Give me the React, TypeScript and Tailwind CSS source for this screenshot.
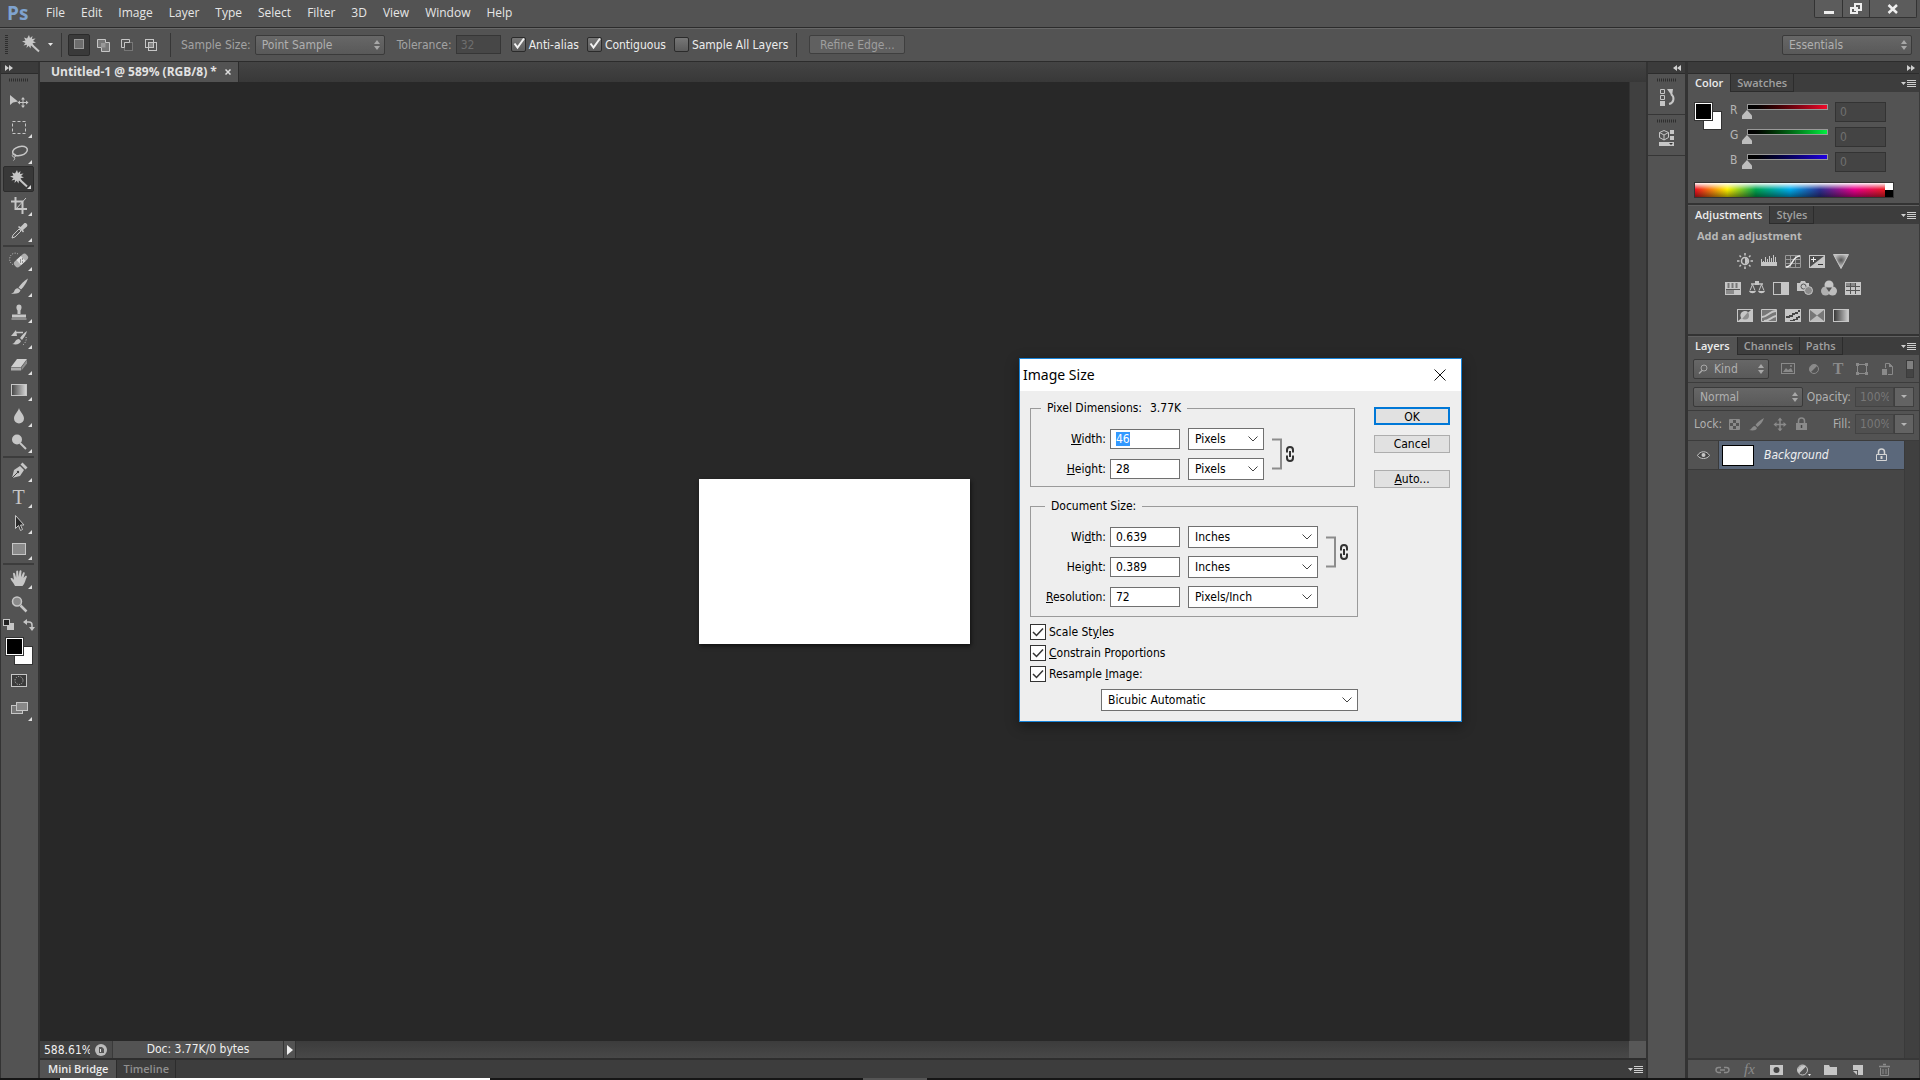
import { useEffect, useRef } from 'react';
import type { ReactNode } from 'react';
import { clsx } from 'clsx';

// ── Drawing helpers ──────────────────────────────────────
function Svg({ w = 20, h = 20, className, children }: {
  w?: number;
  h?: number;
  className?: string;
  children: ReactNode;
}) {
  return (
    <svg width={w} height={h} viewBox={`0 0 ${w} ${h}`} fill="none" stroke="none" className={clsx('shrink-0', className)} aria-hidden="true">
      {children}
    </svg>
  );
}

const L = '#c6c6c6';

const WandShape = () => (
  <>
    <path d="M7 0l1 3 2.500-2-.5 3 3.500-.5-2.500 2.500 3 1.500-3.500.8 1.500 2.700-3-1-.5 3.500-1.800-2.800L4.500 13l.5-3.200-3.500.7 2-2.500L0 6.500l3.500-1L2 2.500l3 1z" fill={L} />
    <path d="M9.500 9.500l7.500 7" stroke={L} strokeWidth="2" />
  </>
);

const BrushShape = () => (
  <>
    <path d="M18 1.500C14 4 10.500 7.500 8.500 10.500l2.500 2C14 9.500 16.500 6 18 1.500z" fill={L} />
    <path d="M8 11.200l2.500 2c-.5 3-4.500 4-9.500 3.300 2.500-.5 3-1.500 3.500-3 .5-1.600 2-2.600 3.500-2.300z" fill={L} />
  </>
);

const Grip = () => (
  <Svg w={20} h={4}>
    <path d="M0 2h20" stroke="#2e2e2e" strokeWidth="3" strokeDasharray="1 1" />
  </Svg>
);

// ── Tool icons ───────────────────────────────────────────
const toolIcons: Record<string, ReactNode> = {
  move: (
    <>
      <path d="M1 4v10l3-2.500 5-1z" fill={L} />
      <path d="M14 7v9M9.500 11.500h9" stroke={L} />
      <path d="M12 8.500l2-2.500 2 2.500zM12 14.500l2 2.500 2-2.500zM11 9.500L8.500 11.500l2.500 2zM17 9.500l2.500 2-2.500 2z" fill={L} />
    </>
  ),
  marquee: <rect x="3.500" y="4.500" width="13" height="12" stroke={L} strokeDasharray="3 2" />,
  lasso: (
    <>
      <ellipse cx="11" cy="8" rx="7.500" ry="4.500" transform="rotate(-15 11 8)" stroke={L} strokeWidth="1.500" />
      <path d="M5 11c-2 0-2.500 3 0 3s3-3 0-3zM5 14c1 1 1 2-.5 3.500" stroke={L} />
    </>
  ),
  wand: <g transform="translate(1 1)"><WandShape /></g>,
  crop: (
    <>
      <path d="M6.500 2v12H18M2 6.500h11.500V19" stroke={L} strokeWidth="2" />
      <path d="M7 14L17 3" stroke={L} />
    </>
  ),
  eyedropper: (
    <>
      <path d="M3 17l1-3 6-6 2 2-6 6z" stroke={L} />
      <path d="M9 6l1-1 1.500 1L15 2.500c1.500-1.500 4.500 1 3 3L14 9l1 1.500-1 1z" fill={L} />
    </>
  ),
  heal: (
    <>
      <path d="M9 4a5.500 6 0 1 0-4 11" stroke={L} strokeDasharray="1 1.500" />
      <rect x="4" y="7" width="16" height="7" rx="3" transform="rotate(-42 12 10.500)" fill="#b0b0b0" />
      <rect x="9" y="7" width="6" height="7" transform="rotate(-42 12 10.500)" fill="#dedede" />
      <path d="M11 10h1M13 12h1M13 9h1M11 12h1" stroke="#444" />
    </>
  ),
  brush: <g transform="translate(1 1)"><BrushShape /></g>,
  stamp: (
    <>
      <path d="M8.500 8.500c-2-3-1-6 1.500-6s3.500 3 1.500 6v3.500h-3z" fill={L} />
      <path d="M3 12.500h14v3H3zM2.500 16.500h15v1h-15z" fill={L} />
    </>
  ),
  history: (
    <>
      <path d="M18 3c-3 2-5 4-7 7l2 2c2-3 4-5 5-9zM10 11l2 2c-1 3-4 4-9 3 3 0 3-5 7-5z" fill={L} />
      <path d="M14 4.500H7" stroke={L} strokeWidth="1.500" />
      <path d="M2 8l5-6 1 6z" fill={L} />
      <path d="M17 9c1 3-1 7-4 8.500" stroke={L} strokeDasharray="1 1.500" />
    </>
  ),
  eraser: (
    <>
      <path d="M2 13l6-8h10l-6 8z" fill="#d0d0d0" />
      <path d="M2 13.500h10v3H2z" fill="#adadad" />
      <path d="M12.500 13.500L18 5.500v4l-5.500 7z" fill="#8d8d8d" />
    </>
  ),
  gradient: (
    <>
      <defs>
        <linearGradient id="tool-gradient"><stop stopColor="#444" /><stop offset="1" stopColor="#d8d8d8" /></linearGradient>
      </defs>
      <rect x="2.500" y="4.500" width="15" height="11" fill="url(#tool-gradient)" stroke={L} />
    </>
  ),
  blur: <path d="M10 2c1 4 5 6.500 5 10.500a5 5 0 0 1-10 0C5 8.500 9 6 10 2z" fill={L} />,
  dodge: (
    <>
      <circle cx="8" cy="7.500" r="5" fill={L} />
      <path d="M11 11l6 6" stroke={L} strokeWidth="2" />
    </>
  ),
  pen: (
    <>
      <path d="M3 17l2-8 6-4 4 4-4 6z" fill={L} />
      <path d="M11.500 3.500l2-2 5 5-2 2z" fill={L} />
      <path d="M3 17l5.500-5.500" stroke="#444" />
      <circle cx="9" cy="11" r="1.200" fill="#444" />
    </>
  ),
  type: null,
  select: <path d="M6.500 2.500v13l3-3 2 5 2-1-2-4.500h3.500z" fill="#2a2a2a" stroke={L} />,
  shape: <rect x="3.500" y="4.500" width="13" height="11" fill="#8a8a8a" stroke={L} />,
  hand: (
    <path d="M6 18c-1-3-4-5-4.500-7.500.8-1 2-.5 3.500 1.500L4 5.500c.3-1.200 1.500-1 2 .2l1.200 4V3.500c.4-1.300 1.800-1.200 2 0l.3 5.500 1-6c.5-1.200 1.900-.9 2 .3L12 9.200l2-4.500c.8-.9 1.900-.4 1.700.7L14.500 10l1.800-2c.9-.6 1.800.1 1.500 1-1.500 3-1.800 6.500-4.300 9z"
      fill={L}
    />
  ),
  zoom: (
    <>
      <circle cx="8" cy="7.500" r="4.500" fill="#8a8a8a" stroke={L} strokeWidth="1.500" />
      <path d="M11.500 11.500l6 6" stroke={L} strokeWidth="2.500" />
    </>
  ),
};

const toolGroups: string[][] = [
  ['move', 'marquee', 'lasso', 'wand', 'crop', 'eyedropper'],
  ['heal', 'brush', 'stamp', 'history', 'eraser', 'gradient', 'blur', 'dodge'],
  ['pen', 'type', 'select', 'shape'],
  ['hand', 'zoom'],
];

function Tool({ name }: { name: string }) {
  const active = name === 'wand';
  const corner = name !== 'move' && name !== 'zoom';
  return (
    <button
      type="button"
      aria-label={name}
      className={clsx(
        'relative flex h-[26px] w-[31px] items-center justify-center rounded-xs',
        active && 'border border-[#2c2c2c] bg-[#383838]',
      )}
    >
      {name === 'type' ? (
        <span className="font-['Liberation_Serif',serif] text-[20px] leading-5 text-[#c6c6c6]">T</span>
      ) : (
        <Svg>{toolIcons[name]}</Svg>
      )}
      {corner && (
        <svg width="4" height="4" viewBox="0 0 4 4" className="absolute right-0.5 bottom-0.5"><path d="M4 0v4H0z" fill="#e0e0e0" /></svg>
      )}
    </button>
  );
}

function Swatches() {
  return (
    <div className="grid size-7 shrink-0 grid-cols-1">
      <span className="col-start-1 row-start-1 size-[19px] self-end justify-self-end border border-[#333] bg-white" />
      <span className="z-10 col-start-1 row-start-1 size-[19px] border border-[#333] bg-white p-px">
        <span className="block size-full bg-black" />
      </span>
    </div>
  );
}

function Toolbar() {
  return (
    <aside className="flex w-10 shrink-0 flex-col border-r-2 border-l border-[#333] bg-[#535353]">
      <CollapseBar direction="right" align="start" />
      <div className="flex flex-col items-center pt-1 pr-0.5">
        <Grip />
        <div className="mt-1.5 flex flex-col items-center gap-px">
          {toolGroups.map((group, i) => (
            <div key={i} className={clsx('flex flex-col items-center', i > 0 && 'border-t-2 border-[#3c3c3c]')}>
              {group.map((name) => <Tool key={name} name={name} />)}
            </div>
          ))}
        </div>
        <div className="mt-0.5 flex gap-2">
          <Svg w={12} h={12}>
            <rect x="4" y="4" width="7" height="7" fill={L} />
            <rect x="0.500" y="0.500" width="6" height="6" fill="#222" stroke={L} />
          </Svg>
          <Svg w={12} h={12}>
            <path d="M3 3h3c2 0 3 1 3 3v3" stroke={L} strokeWidth="1.500" />
            <path d="M0 3l4-3v6zM6 8h6l-3 4z" fill={L} />
          </Svg>
        </div>
        <div className="mt-1.5 mb-1"><Swatches /></div>
        <button type="button" aria-label="Quick mask" className="flex h-[22px] items-center">
          <Svg>
            <rect x="2.500" y="4.500" width="15" height="12" stroke={L} fill="#3b3b3b" />
            <circle cx="10" cy="10.500" r="4" stroke={L} strokeDasharray="1 1.500" />
          </Svg>
        </button>
        <button type="button" aria-label="Screen mode" className="relative flex h-[32px] w-[31px] items-center justify-center">
          <Svg>
            <rect x="2.500" y="8.500" width="11" height="8" fill="#777" stroke={L} />
            <rect x="7.500" y="5.500" width="11" height="8" fill="#888" stroke={L} />
          </Svg>
          <svg width="4" height="4" viewBox="0 0 4 4" className="absolute right-0.5 bottom-0.5"><path d="M4 0v4H0z" fill="#e0e0e0" /></svg>
        </button>
      </div>
    </aside>
  );
}

function CollapseBar({ direction, align }: { direction: 'left' | 'right'; align: 'start' | 'end' }) {
  return (
    <div className={clsx('flex h-3 shrink-0 items-center border-b border-[#2c2c2c] bg-[#3b3b3b] px-1', align === 'end' && 'justify-end')}>
      <Svg w={8} h={6}>
        <path d={direction === 'right' ? 'M0 0l4 3-4 3zM4 0l4 3-4 3z' : 'M4 0L0 3l4 3zM8 0L4 3l4 3z'} fill="#cfcfcf" />
      </Svg>
    </div>
  );
}

// ── Shared dark controls ─────────────────────────────────
function DarkSelect({ label, options, className, icon }: {
  label: string;
  options: string[];
  className: string;
  icon?: ReactNode;
}) {
  return (
    <div className={clsx('flex h-5 items-center rounded-xs border border-[#3a3a3a] bg-linear-to-b from-[#676767] to-[#595959] pr-1', className)}>
      {icon}
      <select aria-label={label} className="min-w-0 flex-1 appearance-none bg-transparent pl-1.5 text-[#b0b0b0] outline-none">
        {options.map((o) => <option key={o}>{o}</option>)}
      </select>
      <Svg w={6} h={10}>
        <path d="M0 4l3-4 3 4zM0 6l3 4 3-4z" fill="#a8a8a8" />
      </Svg>
    </div>
  );
}

function DarkCheck({ label, checked }: { label: string; checked?: boolean }) {
  return (
    <label className="flex items-center gap-[3px] text-[#ededed]">
      <span className="grid">
        <input
          type="checkbox"
          defaultChecked={checked}
          className="peer col-start-1 row-start-1 size-[15px] appearance-none rounded-xs border border-[#2b2b2b] bg-linear-to-b from-[#777] to-[#5c5c5c]"
        />
        <Svg w={15} h={15} className="pointer-events-none col-start-1 row-start-1 opacity-0 peer-checked:opacity-100">
          <path d="M3.500 6.500l3 4L13 1.500" stroke="#f2f2f2" strokeWidth="2" />
        </Svg>
      </span>
      {label}
    </label>
  );
}

const Divider = () => <span className="block h-6 w-px shrink-0 bg-[#363636]" />;

// ── Menu bar ─────────────────────────────────────────────
const menus = ['File', 'Edit', 'Image', 'Layer', 'Type', 'Select', 'Filter', '3D', 'View', 'Window', 'Help'];

function MenuBar() {
  return (
    <header className="flex h-7 shrink-0 items-start border-b border-[#2c2c2c]">
      <span className="w-[38px] pl-[7px] font-['Open_Sans',sans-serif] text-[19px] leading-[26px] font-bold text-[#7fa3cf]">Ps</span>
      <nav className="flex pt-1 font-['Open_Sans',sans-serif] text-[12px] leading-[18px] text-[#e6e6e6]">
        {menus.map((m) => <button key={m} type="button" className="px-2">{m}</button>)}
      </nav>
      <div className="mr-[3px] ml-auto flex h-[18px] divide-x divide-[#333] rounded-b-xs border border-t-0 border-[#333] bg-[#5c5c5c]">
        <button type="button" aria-label="Minimize" className="flex w-7 items-center justify-center">
          <Svg w={12} h={12}><path d="M1 8h10v3H1z" fill="#eee" /></Svg>
        </button>
        <button type="button" aria-label="Restore" className="flex w-[27px] items-center justify-center">
          <Svg w={12} h={12}>
            <path d="M5 1h6v6H5zM1 5h6v5H1z" stroke="#eee" strokeWidth="2" />
          </Svg>
        </button>
        <button type="button" aria-label="Close" className="flex w-[46px] items-center justify-center">
          <Svg w={12} h={12}><path d="M1.500 2l8.500 8M10 2l-8.500 8" stroke="#eee" strokeWidth="2.500" /></Svg>
        </button>
      </div>
    </header>
  );
}

// ── Options bar ──────────────────────────────────────────
function OptionsBar() {
  return (
    <div className="flex h-[34px] shrink-0 items-center border-t border-b border-t-[#686868] border-b-[#2c2c2c] pr-2 pb-px pl-[5px]">
      <Svg w={3} h={20}><path d="M1.500 0v20" stroke="#2e2e2e" strokeWidth="3" strokeDasharray="1 1" /></Svg>
      <button type="button" aria-label="Tool presets" className="ml-3.5 flex items-center gap-1.5">
        <Svg><WandShape /></Svg>
        <Svg w={5} h={3}><path d="M0 0h5L2.500 3z" fill="#e8e8e8" /></Svg>
      </button>
      <div className="mr-1.5 ml-2"><Divider /></div>
      <div className="flex gap-0.5">
        <button type="button" aria-label="New selection" className="flex size-[22px] items-center justify-center rounded-xs border border-[#2b2b2b] bg-[#3a3a3a]">
          <Svg w={12} h={12}><rect x="1.500" y="0.500" width="9" height="9" fill="#6d6d6d" stroke="#999" /></Svg>
        </button>
        <button type="button" aria-label="Add to selection" className="flex size-[22px] items-center justify-center">
          <Svg w={14} h={14}>
            <path d="M1.500 1.500h8v3h4v9h-8v-4h-4z" fill="#777" stroke={L} />
            <path d="M5 5h4.500v4.500H5z" fill="#999" />
          </Svg>
        </button>
        <button type="button" aria-label="Subtract from selection" className="flex size-[22px] items-center justify-center">
          <Svg w={14} h={14}>
            <rect x="4.500" y="4.500" width="8" height="8" fill="#4b4b4b" stroke="#777" />
            <path d="M9.500 4V1.500h-8v8H4.500v-5h5z" fill="#555" stroke={L} />
          </Svg>
        </button>
        <button type="button" aria-label="Intersect with selection" className="flex size-[22px] items-center justify-center">
          <Svg w={14} h={14}>
            <rect x="5" y="5" width="4" height="4" fill="#858585" />
            <rect x="1.500" y="1.500" width="8" height="8" stroke={L} />
            <rect x="4.500" y="4.500" width="8" height="8" stroke={L} />
          </Svg>
        </button>
      </div>
      <div className="mr-2.5 ml-2"><Divider /></div>
      <span className="text-[#a3a3a3]">Sample Size:</span>
      <DarkSelect label="Sample Size" options={['Point Sample']} className="ml-1 w-[130px]" />
      <label className="ml-3 flex items-center gap-1 text-[#a3a3a3]">
        Tolerance:
        <input defaultValue="32" disabled className="h-[19px] w-[45px] border border-[#363636] bg-[#474747] px-1 text-[#6e6e6e]" />
      </label>
      <div className="ml-2.5 flex gap-2">
        <DarkCheck label="Anti-alias" checked />
        <DarkCheck label="Contiguous" checked />
        <DarkCheck label="Sample All Layers" />
      </div>
      <div className="mr-3 ml-2"><Divider /></div>
      <button type="button" disabled className="h-[19px] w-24 rounded-xs border border-[#3f3f3f] bg-[#606060] leading-4 text-[#9e9e9e]">Refine Edge...</button>
      <DarkSelect label="Workspace" options={['Essentials']} className="ml-auto w-[130px]" />
    </div>
  );
}

// ── Panels ───────────────────────────────────────────────
const PanelMenu = () => (
  <button type="button" aria-label="Panel menu" className="mr-[3px] ml-auto">
    <Svg w={15} h={9}>
      <path d="M0 3h5L2.500 6z" fill="#cfcfcf" />
      <path d="M6 1.500h9M6 3.500h9M6 5.500h9M6 7.500h9" stroke="#cfcfcf" />
    </Svg>
  </button>
);

function PanelTabs({ tabs }: { tabs: string[] }) {
  return (
    <div className="flex h-[18px] items-center bg-[#3d3d3d] font-['Open_Sans',sans-serif] text-[11px] leading-[18px] font-semibold">
      {tabs.map((t, i) => (
        <button
          key={t}
          type="button"
          className={clsx('h-full border-r border-[#2c2c2c]', i === 0 ? 'bg-[#535353] px-[7px] text-[#ececec]' : 'border-b px-1.5 text-[#a0a0a0]')}
        >
          {t}
        </button>
      ))}
      <PanelMenu />
    </div>
  );
}

function Channel({ name, track }: { name: string; track: string }) {
  return (
    <label className="flex h-[25px] items-start text-[#b5b5b5]">
      <span className="w-2.5">{name}</span>
      <span className="mx-0.5 flex w-[91px] flex-col pt-0.5">
        <span className={clsx('mx-[5px] h-[6px] border border-[#999] bg-linear-to-r from-black', track)} />
        <input
          type="range"
          min="0"
          max="255"
          defaultValue="0"
          className="h-[9px] w-full appearance-none bg-transparent [&::-webkit-slider-thumb]:h-[9px] [&::-webkit-slider-thumb]:w-[10px] [&::-webkit-slider-thumb]:appearance-none [&::-webkit-slider-thumb]:bg-[#bdbdbd] [&::-webkit-slider-thumb]:[clip-path:polygon(50%_0,100%_60%,100%_100%,0_100%,0_60%)]"
        />
      </span>
      <input aria-label={`${name} value`} defaultValue="0" disabled className="h-[20px] w-[51px] border border-[#333] bg-[#444] px-1 text-[#707070]" />
    </label>
  );
}

function ColorPanel() {
  return (
    <section className="border-b-2 border-[#333]">
      <PanelTabs tabs={['Color', 'Swatches']} />
      <div className="flex h-[90px] gap-2 pt-2.5 pl-1.5">
        <Swatches />
        <div className="flex flex-col">
          <Channel name="R" track="to-[#f00a2a]" />
          <Channel name="G" track="to-[#00f040]" />
          <Channel name="B" track="to-[#2000e0]" />
        </div>
      </div>
      <div className="mb-[5px] ml-1.5 flex h-4 w-[200px] border border-[#333]">
        <div className="flex-1 bg-[linear-gradient(to_bottom,rgba(255,255,255,0.95),transparent_45%,rgba(0,0,0,0.45)),linear-gradient(to_right,#f01020,#fff200_17%,#00a651_32%,#00aeef_50%,#2e3192_66%,#ec008c_84%,#ed1c24)]" />
        <div className="w-2 bg-linear-to-b from-white from-50% to-black to-50%" />
      </div>
    </section>
  );
}

const adjustmentRows: ReactNode[][] = [
  [
    <>
      <circle cx="8" cy="8" r="3.500" stroke={L} strokeWidth="1.500" />
      <path d="M8 5a3 3 0 0 1 0 6z" fill={L} />
      <path d="M8 0v2.500M8 13.500V16M0 8h2.500M13.500 8H16M2.500 2.500l1.500 1.500M12 12l1.500 1.500M2.500 13.500L4 12M12 4l1.500-1.500" stroke={L} strokeWidth="1.500" />
    </>,
    <>
      <path d="M0 9h16v4H0z" fill={L} />
      <path d="M.5 6v4M2.500 8v2M4.500 4v6M6.500 6v4M8.500 3v7M10.500 5v5M12.500 2v8M14.500 4v6" stroke={L} />
    </>,
    <>
      <path d="M.5 2.500h15v12H.5zM5.500 2.500v12M10.500 2.500v12M.5 6.500h15M.5 10.500h15" stroke="#999" />
      <path d="M1 14c7 0 6-11 14-11" stroke="#eee" strokeWidth="1.500" />
    </>,
    <>
      <rect x="0.500" y="2.500" width="15" height="12" fill="#4c4c4c" stroke={L} />
      <path d="M15 3v11H1z" fill={L} />
      <path d="M2 6.500h5M4.500 4v5" stroke="#eee" />
      <path d="M9 11.500h5" stroke="#333" />
    </>,
    <>
      <defs>
        <radialGradient id="vibrance" cx="0.500" cy="0.400" r="0.450"><stop stopColor="#555" /><stop offset="1" stopColor="#bbb" /></radialGradient>
      </defs>
      <path d="M.5 1.500h15L8 15.500z" fill="url(#vibrance)" stroke={L} />
    </>,
  ],
  [
    <>
      <path d="M0 2h16v13H0z" fill={L} />
      <path d="M3.500 3v5M7.500 3v5M11.500 3v5" stroke="#777" strokeWidth="2" />
      <path d="M1 9h14v1H1z" fill="#555" />
      <path d="M1 10h8v4H1z" fill="#8b8b8b" />
    </>,
    <>
      <path d="M2 4h12" stroke={L} strokeWidth="1.500" />
      <path d="M6 1h4v4H6z" fill={L} />
      <path d="M3.500 4.500L1 10.500M3.500 4.500L6 10.500M12.500 4.500L10 10.500M12.500 4.500l2.500 6" stroke={L} />
      <path d="M0 11h7c-1 3-6 3-7 0zM9 11h7c-1 3-6 3-7 0z" fill={L} />
    </>,
    <>
      <rect x="0.500" y="2.500" width="15" height="12" fill="#555" stroke={L} />
      <path d="M8 3h7v11H8z" fill={L} />
    </>,
    <>
      <path d="M0 3h3l1-2h4l1 2h3v8H0z" fill={L} />
      <circle cx="6.500" cy="6.500" r="2.500" stroke="#555" />
      <circle cx="11.500" cy="10.500" r="4" fill="#8c8c8c" stroke={L} />
    </>,
    <>
      <circle cx="8" cy="5" r="4.500" fill={L} />
      <circle cx="4.500" cy="11" r="4.500" fill="#b0b0b0" />
      <circle cx="11.500" cy="11" r="4.500" fill="#bdbdbd" />
      <path d="M5 7.500h6L8 12z" fill="#555" />
    </>,
    <>
      <path d="M0 2h16v13H0z" fill={L} />
      <path d="M1 6.500h14M1 10.500h14M5.500 3v11M10.500 3v11" stroke="#555" />
      <path d="M1 3h4v3H1zM6 3h4v3H6z" fill="#888" />
    </>,
  ],
  [
    <>
      <path d="M0 2h16v13H0z" fill={L} />
      <path d="M1 14V3h13z" fill="#555" />
      <circle cx="8" cy="8.500" r="4" fill="#8f8f8f" />
      <path d="M5 12a4.500 4.500 0 0 1 6-7z" fill={L} />
    </>,
    <>
      <path d="M.5 2.500h15v12H.5z" fill="#777" stroke={L} />
      <path d="M1 10c5 0 8-6 14-6M3 14c5 0 7-4 12-5" stroke={L} strokeWidth="2" />
    </>,
    <>
      <path d="M0 2h16v13H0z" fill={L} />
      <path d="M1 9h3V8h3V6h3V5h3V3h2v2h-2v2h-3v1H8v2H5v1H1zM5 14v-1h3v-1h3v-2h2V9h2v2h-2v2h-3v1z" fill="#454545" />
    </>,
    <>
      <path d="M.5 2.500h15v12H.5z" fill="#777" stroke={L} />
      <path d="M1 3h14L8 8.500zM1 14h14L8 8.500z" fill="#bdbdbd" />
    </>,
    <>
      <defs>
        <linearGradient id="adj-gradient"><stop stopColor="#333" /><stop offset="1" stopColor="#d0d0d0" /></linearGradient>
      </defs>
      <rect x="0.500" y="2.500" width="15" height="12" fill="url(#adj-gradient)" stroke={L} />
    </>,
  ],
];

function AdjustmentsPanel() {
  return (
    <section className="border-t border-b-2 border-t-[#606060] border-b-[#333]">
      <PanelTabs tabs={['Adjustments', 'Styles']} />
      <div className="h-[110px] pt-[3px]">
        <h2 className="pl-[9px] font-['Open_Sans',sans-serif] text-[11px] leading-[18px] font-bold text-[#b8b8b8]">Add an adjustment</h2>
        <div className="mt-2 flex w-[210px] flex-col gap-[11px]">
          {adjustmentRows.map((row, i) => (
            <div key={i} className="flex justify-center gap-2">
              {row.map((icon, j) => (
                <button key={j} type="button" aria-label={`Adjustment ${i + 1}-${j + 1}`}><Svg w={16} h={16}>{icon}</Svg></button>
              ))}
            </div>
          ))}
        </div>
      </div>
    </section>
  );
}

function PercentField({ label }: { label: string }) {
  return (
    <div className="ml-auto flex h-5 items-center text-[#b0b0b0]">
      <label className="flex items-center gap-1">
        {label}
        <input defaultValue="100%" disabled className="h-5 w-[39px] border border-[#434343] bg-[#505050] px-1 text-[#787878]" />
      </label>
      <button type="button" aria-label={`${label} slider`} className="flex h-5 w-5 items-center justify-center border border-[#3f3f3f] bg-[#636363]">
        <Svg w={6} h={3}><path d="M0 0h6L3 3z" fill="#b5b5b5" /></Svg>
      </button>
    </div>
  );
}

const D = '#8a8a8a';

const LockShape = ({ color }: { color: string }) => (
  <>
    <path d="M3.500 6V4a3 3 0 0 1 6 0v2" stroke={color} strokeWidth="1.500" />
    <path d="M1.500 6.500h10v6h-10z" stroke={color} />
    <path d="M6.500 8v3" stroke={color} strokeWidth="2" />
  </>
);

const footerIcons: { name: string; icon: ReactNode }[] = [
  {
    name: 'Link layers',
    icon: <path d="M6 5.500H3.500a2.500 2.500 0 0 0 0 5H6M9 5.500h2.500a2.500 2.500 0 0 1 0 5H9M5 8h5" stroke={D} strokeWidth="1.500" />,
  },
  { name: 'Layer style', icon: null },
  {
    name: 'Add mask',
    icon: <><path d="M1 3h13v10H1z" fill={L} /><circle cx="7.500" cy="8" r="3" fill="#444" /></>,
  },
  {
    name: 'New adjustment layer',
    icon: <><circle cx="6.500" cy="8" r="5" fill="#555" stroke={L} /><path d="M3 11.500A5 5 0 0 1 10 4.500z" fill={L} /><path d="M12 12h3l-1.500 2z" fill="#eee" /></>,
  },
  { name: 'New group', icon: <path d="M1 3h5l1 2h7v8H1z" fill={L} /> },
  {
    name: 'New layer',
    icon: <path d="M3 3h10v10H8V8H3z M3 9l4 4V9z" fill={L} />,
  },
  {
    name: 'Delete layer',
    icon: <><path d="M3.500 6v7.500h8V6M6 7v5M9 7v5" stroke={D} /><path d="M2 4.500h11M6 2.500h3" stroke={D} strokeWidth="1.500" /></>,
  },
];

function LayersPanel() {
  return (
    <section className="flex flex-1 flex-col border-t border-[#606060]">
      <PanelTabs tabs={['Layers', 'Channels', 'Paths']} />
      <div className="flex h-7 items-center gap-2 border-b border-[#3c3c3c] pr-[5px] pl-[5px]">
        <DarkSelect
          label="Filter kind"
          options={['Kind']}
          className="w-[76px]"
          icon={<Svg w={14} h={10}><circle cx="10" cy="4" r="3" stroke="#a8a8a8" /><path d="M8 6.500L5 9.500" stroke="#a8a8a8" strokeWidth="1.500" /></Svg>}
        />
        <div className="flex flex-1 items-center justify-between pl-1">
          <Svg w={14} h={12}><rect x="0.500" y="0.500" width="13" height="10" stroke={D} /><path d="M2 9l3-4 2 2 3-2 2 4z" fill={D} /><circle cx="10" cy="3" r="1" fill={D} /></Svg>
          <Svg w={12} h={12}><circle cx="6" cy="6" r="4.500" stroke={D} /><path d="M2.500 9.500A5 5 0 0 1 9.500 2.500z" fill={D} /></Svg>
          <span className="font-['Liberation_Serif',serif] text-[16px] leading-4 font-bold text-[#8a8a8a]">T</span>
          <Svg w={12} h={12}><path d="M1.500 1.500h9v9h-9z" stroke={D} /><path d="M0 0h3v3H0zM9 0h3v3H9zM0 9h3v3H0zM9 9h3v3H9z" fill={D} /></Svg>
          <Svg w={12} h={12}><path d="M4.500 5V.5h4l3 3v8H7" stroke={D} /><path d="M8 0v4h4M1 6h5v6H1z" fill={D} /></Svg>
          <span className="h-[18px] w-2 border border-[#3c3c3c] bg-linear-to-b from-[#808080] from-50% to-[#444] to-50%" />
        </div>
      </div>
      <div className="flex h-7 items-center border-b border-[#3c3c3c] pr-[5px] pl-[5px]">
        <DarkSelect label="Blend mode" options={['Normal']} className="w-[110px]" />
        <PercentField label="Opacity:" />
      </div>
      <div className="flex h-[30px] items-center border-b border-[#3c3c3c] pr-[5px] pb-[3px] pl-1.5 text-[#b0b0b0]">
        Lock:
        <div className="flex gap-2 pl-1.5">
          <Svg w={13} h={14}><path d="M1.500 2.500h10v10h-10z" stroke={D} /><path d="M2 3h3v3H2zM8 3h3v3H8zM5 6h3v3H5zM2 9h3v3H2zM8 9h3v3H8z" fill={D} /></Svg>
          <Svg w={16} h={14}><path d="M15 1C11 3 8 6 6.500 8l2 2C11 8 14 5 15 1zM6 9l2 2c-1 3-5 2.500-8 2 3-.5 3-4 6-4z" fill={D} /></Svg>
          <Svg w={14} h={14}><path d="M7 2v11M2 7.500h10" stroke={D} strokeWidth="1.500" /><path d="M4.500 3.500L7 .5l2.500 3zM4.500 11.500l2.500 3 2.500-3zM3.500 5l-3 2.500 3 2.500zM10.500 5l3 2.500-3 2.500z" fill={D} /></Svg>
          <Svg w={13} h={14}><path d="M3.500 6V4a3 3 0 0 1 6 0v2" stroke={D} strokeWidth="1.500" /><path d="M1 6h11v7H1z" fill={D} /><path d="M6.500 8v3" stroke="#444" strokeWidth="1.500" /></Svg>
        </div>
        <PercentField label="Fill:" />
      </div>
      <div className="flex flex-1 bg-[#464646]">
        <ul className="flex-1">
          <li className="flex h-[29px] items-center border-b border-[#3a3a3a] bg-[#535353]">
            <button type="button" aria-label="Toggle visibility" className="flex w-[30px] items-center justify-center">
              <Svg w={13} h={10}><path d="M.5 5.500C3 .5 10 .5 12.500 5.500 10 9.500 3 9.500.5 5.500z" fill="#444" stroke={L} /><circle cx="6.500" cy="5" r="2" fill={L} /></Svg>
            </button>
            <div className="flex h-full flex-1 items-center border-l border-[#3a3a3a] bg-[#5b687b] pr-4 pl-[3px]">
              <span className="h-[21px] w-8 border border-black bg-white" />
              <span className="flex-1 pl-2.5 text-[#f0f0f0] italic">Background</span>
              <Svg w={13} h={14}><LockShape color="#d5d5d5" /></Svg>
            </div>
          </li>
        </ul>
        <div className="w-[15px] border-l border-[#3a3a3a] bg-[#404040]" />
      </div>
      <div className="flex h-5 items-center justify-center gap-3 border-t-2 border-[#383838] bg-[#535353]">
        {footerIcons.map(({ name, icon }) => (
          <button key={name} type="button" aria-label={name}>
            {icon ? <Svg w={15} h={15}>{icon}</Svg> : <span className="block w-[15px] font-['Liberation_Serif',serif] text-[15px] leading-[15px] text-[#8a8a8a] italic">fx</span>}
          </button>
        ))}
      </div>
    </section>
  );
}

function IconDock() {
  return (
    <aside className="flex w-[42px] shrink-0 flex-col border-r-3 border-l-2 border-[#333] bg-[#535353]">
      <CollapseBar direction="left" align="end" />
      <button type="button" aria-label="History" className="flex h-[41px] flex-col items-center gap-1.5 border-b border-[#363636] pt-1">
        <Grip />
        <Svg w={18} h={18}>
          <path d="M2.500 1.500h4v4h-4zM2.500 7.500h4v4h-4z" stroke={L} />
          <path d="M2 13h5v5H2z" fill={L} />
          <path d="M11 16c5-1 6-7 2-10" stroke={L} strokeWidth="2" />
          <path d="M9 1h6l-1 7z" fill={L} />
        </Svg>
      </button>
      <button type="button" aria-label="Properties" className="flex h-[41px] flex-col items-center gap-1.5 border-b border-[#363636] pt-1">
        <Grip />
        <Svg w={18} h={18}>
          <path d="M6 1.500l4.500 2v5L6 11 1.500 8.500v-5zM1.500 3.500L6 6l4.500-2.500M6 6v5" stroke={L} />
          <path d="M12 1h4v4h-4zM12 7h4v4h-4zM1 13h15v4H1z" fill={L} />
          <path d="M11 14h4l-2 2z" fill="#333" />
        </Svg>
      </button>
    </aside>
  );
}

// ── Document window ──────────────────────────────────────
function DocumentArea() {
  return (
    <main className="flex min-w-0 flex-1 flex-col">
      <div className="flex h-5 shrink-0 bg-linear-to-b from-[#444] to-[#383838] font-['Open_Sans',sans-serif] font-bold">
        <div className="flex items-center gap-2 border-r border-[#2c2c2c] bg-[#535353] pr-[7px] pl-[11px] leading-[22px] text-[#e2e2e2]">
          <span>Untitled-1 @ 589% (RGB/8) *</span>
          <button type="button" aria-label="Close tab"><Svg w={6} h={6}><path d="M.5.5l5 5M5.500.5l-5 5" stroke="#ddd" strokeWidth="1.500" /></Svg></button>
        </div>
      </div>
      <div className="flex min-h-0 flex-1">
        <div className="flex flex-1 items-center justify-center bg-[#282828]">
          <div className="h-[165px] w-[271px] bg-white shadow-[1px_2px_4px_#111]" />
        </div>
        <div className="w-[17px] border-l border-[#333] bg-[#404040]" />
      </div>
      <div className="flex h-[17px] shrink-0 bg-linear-to-b from-[#3c3c3c] to-[#484848] leading-4 text-[#efefef]">
        <input aria-label="Zoom" defaultValue="588.61%" className="w-[50px] bg-[#3f3f3f] pl-1 outline-none" />
        <span className="flex w-[22px] items-center justify-center bg-[#4b4b4b]">
          <Svg w={12} h={12}><circle cx="6" cy="6" r="6" fill="#bbb" /><path d="M4 3h3l2 2v4H4z" fill="#555" /><path d="M5 5h1v3H5z" fill="#ddd" /></Svg>
        </span>
        <span className="w-[171px] border-l border-[#3a3a3a] bg-[#535353] text-center">Doc: 3.77K/0 bytes</span>
        <button type="button" aria-label="Status menu" className="flex w-[13px] items-center justify-center border-x border-[#333] bg-[#535353]">
          <Svg w={6} h={10}><path d="M0 0l6 5-6 5z" fill="#f0f0f0" /></Svg>
        </button>
        <span className="ml-auto w-[17px] bg-[#585858]" />
      </div>
      <div className="flex h-5 shrink-0 items-center border-t-2 border-[#2e2e2e] bg-[#3d3d3d] font-['Open_Sans',sans-serif] text-[11px] leading-[18px] font-semibold">
        <button type="button" className="h-full border-r border-[#2c2c2c] bg-[#535353] px-2 text-[#ececec]">Mini Bridge</button>
        <button type="button" className="h-full border-r border-[#2c2c2c] px-1.5 text-[#909090]">Timeline</button>
        <PanelMenu />
      </div>
    </main>
  );
}

// ── Image Size dialog ────────────────────────────────────
function LightSelect({ label, option, className }: { label: string; option: string; className: string }) {
  return (
    <div className={clsx('flex h-[22px] items-center border border-[#707070] bg-white pr-[5px]', className)}>
      <select aria-label={label} className="min-w-0 flex-1 appearance-none bg-transparent pl-1.5 text-black outline-none">
        <option>{option}</option>
      </select>
      <Svg w={10} h={6}><path d="M.5.5L5 5 9.500.5" stroke="#444" /></Svg>
    </div>
  );
}

function FieldRow({ id, label, value, unit, wide, selected }: {
  id: string;
  label: ReactNode;
  value: string;
  unit: string;
  wide?: boolean;
  selected?: boolean;
}) {
  const ref = useRef<HTMLInputElement>(null);

  useEffect(() => {
    if (selected) ref.current?.select();
  }, [selected]);

  return (
    <div className="flex items-center">
      <label htmlFor={id} className="w-[75px] text-right">{label}</label>
      <input
        id={id}
        ref={ref}
        defaultValue={value}
        className="ml-1 h-5 w-[70px] border border-[#707070] bg-white px-[5px] text-black outline-none selection:bg-[#3399ff] selection:text-white"
      />
      <LightSelect label={`${id} unit`} option={unit} className={clsx('ml-2', wide ? 'w-[130px]' : 'w-[76px]')} />
    </div>
  );
}

const LinkMark = () => (
  <Svg w={24} h={32}>
    <path d="M0 1.500h9v29H0" stroke="#8c8c8c" strokeWidth="2" />
    <path d="M15 14.500v-2.500a3 3 0 0 1 6 0v2.500M15 17.500v2.500a3 3 0 0 0 6 0v-2.500" stroke="#333" strokeWidth="2" />
    <path d="M18 13v6" stroke="#333" strokeWidth="2" />
  </Svg>
);

function LightCheck({ children }: { children: ReactNode }) {
  return (
    <label className="flex h-4 items-center gap-[3px]">
      <span className="grid">
        <input type="checkbox" defaultChecked className="peer col-start-1 row-start-1 size-4 appearance-none border border-[#333] bg-white" />
        <Svg w={16} h={16} className="pointer-events-none col-start-1 row-start-1 opacity-0 peer-checked:opacity-100">
          <path d="M3 8l3.500 3.500L13 4.500" stroke="#333" strokeWidth="1.500" />
        </Svg>
      </span>
      <span>{children}</span>
    </label>
  );
}

const dialogButton = 'h-[18px] w-[76px] bg-[#e1e1e1] leading-4';

function ImageSizeDialog() {
  return (
    <div role="dialog" aria-labelledby="dialog-title" className="absolute top-[358px] left-[1019px] w-[443px] border border-[#1883d7] bg-[#eee] text-black shadow-[0_4px_12px_#0006]">
      <div className="flex h-8 items-center justify-between bg-white pr-[15px] pl-[3px]">
        <h1 id="dialog-title" className="font-['Noto_Sans',sans-serif] text-[14px] leading-5">Image Size</h1>
        <button type="button" aria-label="Close dialog"><Svg w={12} h={12}><path d="M.5.5l11 11M11.500.5l-11 11" stroke="#111" /></Svg></button>
      </div>
      <form className="flex gap-4 px-2.5 pt-[9px] pb-2.5 leading-4">
        <div className="w-[328px]">
          <fieldset className="mr-[3px] flex border border-[#9a9a9a] pb-1.5">
            <legend className="ml-2.5 px-1.5">Pixel Dimensions:<span className="pl-2">3.77K</span></legend>
            <div className="flex items-center gap-2 pt-3">
              <div className="flex flex-col gap-2">
                <FieldRow id="px-width" label={<><u>W</u>idth:</>} value="46" unit="Pixels" selected />
                <FieldRow id="px-height" label={<><u>H</u>eight:</>} value="28" unit="Pixels" />
              </div>
              <LinkMark />
            </div>
          </fieldset>
          <fieldset className="mt-[11px] border border-[#9a9a9a] pb-2">
            <legend className="ml-3.5 px-1.5">Document Size:</legend>
            <div className="flex gap-2 pt-3">
              <div className="flex flex-col gap-2">
                <FieldRow id="doc-width" label={<>Wi<u>d</u>th:</>} value="0.639" unit="Inches" wide />
                <FieldRow id="doc-height" label={<>Hei<u>g</u>ht:</>} value="0.389" unit="Inches" wide />
                <FieldRow id="doc-resolution" label={<><u>R</u>esolution:</>} value="72" unit="Pixels/Inch" wide />
              </div>
              <div className="pt-2.5"><LinkMark /></div>
            </div>
          </fieldset>
          <div className="mt-[7px] flex flex-col gap-[5px]">
            <LightCheck>Scale St<u>y</u>les</LightCheck>
            <LightCheck><u>C</u>onstrain Proportions</LightCheck>
            <LightCheck>Resample <u>I</u>mage:</LightCheck>
          </div>
          <LightSelect label="Resample method" option="Bicubic Automatic" className="mt-[7px] ml-auto w-[257px]" />
        </div>
        <div className="flex flex-col pt-[7px]">
          <button type="button" className={clsx(dialogButton, 'border-2 border-[#0078d7]')}>OK</button>
          <button type="button" className={clsx(dialogButton, 'mt-2.5 border border-[#adadad]')}>Cancel</button>
          <button type="button" className={clsx(dialogButton, 'mt-[17px] border border-[#adadad]')}><u>A</u>uto...</button>
        </div>
      </form>
    </div>
  );
}

export default function App() {
  return (
    <div className="relative flex h-screen flex-col overflow-hidden bg-[#535353] font-['DejaVu_Sans_Condensed','Noto_Sans',sans-serif] text-[12px] leading-4">
      <MenuBar />
      <OptionsBar />
      <div className="flex min-h-0 flex-1">
        <Toolbar />
        <DocumentArea />
        <IconDock />
        <aside className="flex w-[232px] shrink-0 flex-col border-r border-[#3a3a3a]">
          <CollapseBar direction="right" align="end" />
          <ColorPanel />
          <AdjustmentsPanel />
          <LayersPanel />
        </aside>
      </div>
      <div className="flex h-0.5 shrink-0 bg-[#161616] pl-[60px]">
        <span className="w-[430px] bg-white" />
        <span className="ml-[373px] w-16 bg-[#555]" />
      </div>
      <ImageSizeDialog />
    </div>
  );
}
